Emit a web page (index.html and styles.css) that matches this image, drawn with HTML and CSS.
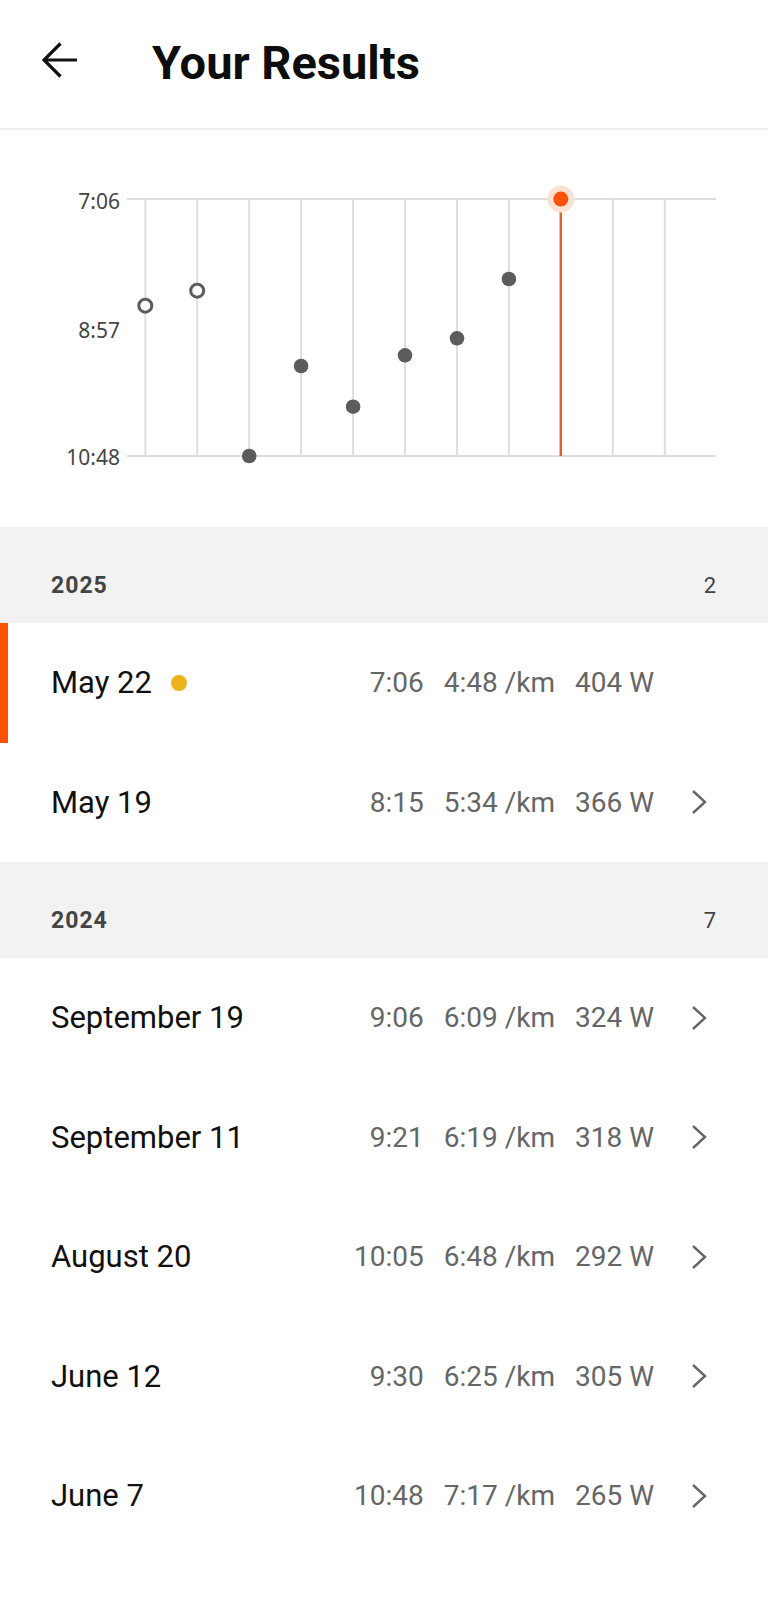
FILE: index.html
```html
<!DOCTYPE html>
<html lang="en">
<head>
    <meta charset="UTF-8">
    <meta name="viewport" content="width=device-width, initial-scale=1.0">
    <title>Your Results</title>
    <link rel="stylesheet" href="styles.css">
</head>
<body>
<div class="screen">

    <header class="topbar">
        <svg class="back" viewBox="0 0 36 36" width="36" height="36">
            <path d="M2 18 H35 M18.5 1.5 L2 18 L18.5 34.5" fill="none" stroke="#111" stroke-width="3.2"/>
        </svg>
        <h1>Your Results</h1>
    </header>

    <!-- grafico: y da pagina menos 130 -->
    <section class="chart">
        <svg viewBox="0 0 768 397" width="768" height="397">
            <g stroke="#dedede" stroke-width="2">
                <line x1="127" y1="69" x2="716" y2="69"/>
                <line x1="127" y1="326" x2="716" y2="326"/>
                <line x1="145.3" y1="69" x2="145.3" y2="326"/>
                <line x1="197.2" y1="69" x2="197.2" y2="326"/>
                <line x1="249.2" y1="69" x2="249.2" y2="326"/>
                <line x1="301.1" y1="69" x2="301.1" y2="326"/>
                <line x1="353.1" y1="69" x2="353.1" y2="326"/>
                <line x1="405" y1="69" x2="405" y2="326"/>
                <line x1="457" y1="69" x2="457" y2="326"/>
                <line x1="508.9" y1="69" x2="508.9" y2="326"/>
                <line x1="612.8" y1="69" x2="612.8" y2="326"/>
                <line x1="664.8" y1="69" x2="664.8" y2="326"/>
            </g>
            <g class="axis-label">
                <text x="120" y="79">7:06</text>
                <text x="120" y="207.5">8:57</text>
                <text x="120" y="334.5">10:48</text>
            </g>
            <line x1="560.8" y1="69" x2="560.8" y2="326" stroke="#d9662c" stroke-width="2.5"/>
            <g fill="#fff" stroke="#5c5c5c" stroke-width="3">
                <circle cx="145.3" cy="175.7" r="6.5"/>
                <circle cx="197.2" cy="160.7" r="6.5"/>
            </g>
            <g fill="#5c5c5c">
                <circle cx="249.2" cy="326" r="7.3"/>
                <circle cx="301.1" cy="236" r="7.3"/>
                <circle cx="353.1" cy="276.7" r="7.3"/>
                <circle cx="405" cy="225.3" r="7.3"/>
                <circle cx="457" cy="208.3" r="7.3"/>
                <circle cx="508.9" cy="149" r="7.3"/>
            </g>
            <circle cx="560.8" cy="69" r="13.5" fill="#fde2d3"/>
            <circle cx="560.8" cy="69" r="7.5" fill="#ff5200"/>
        </svg>
    </section>

    <div class="year">
        <span class="year-title">2025</span>
        <span class="year-count">2</span>
    </div>

    <div class="row current">
        <span class="date">May 22</span>
        <span class="new-dot"></span>
        <div class="stats"><span>7:06</span><span>4:48 /km</span><span>404 W</span></div>
        <svg class="chev" viewBox="0 0 16 26" width="16" height="26"><path d="M2 2 L14 13 L2 24" fill="none" stroke="#666" stroke-width="2.4"/></svg>
    </div>

    <div class="row">
        <span class="date">May 19</span>
        <div class="stats"><span>8:15</span><span>5:34 /km</span><span>366 W</span></div>
        <svg class="chev" viewBox="0 0 16 26" width="16" height="26"><path d="M2 2 L14 13 L2 24" fill="none" stroke="#666" stroke-width="2.4"/></svg>
    </div>

    <div class="year">
        <span class="year-title">2024</span>
        <span class="year-count">7</span>
    </div>

    <div class="row">
        <span class="date">September 19</span>
        <div class="stats"><span>9:06</span><span>6:09 /km</span><span>324 W</span></div>
        <svg class="chev" viewBox="0 0 16 26" width="16" height="26"><path d="M2 2 L14 13 L2 24" fill="none" stroke="#666" stroke-width="2.4"/></svg>
    </div>

    <div class="row">
        <span class="date">September 11</span>
        <div class="stats"><span>9:21</span><span>6:19 /km</span><span>318 W</span></div>
        <svg class="chev" viewBox="0 0 16 26" width="16" height="26"><path d="M2 2 L14 13 L2 24" fill="none" stroke="#666" stroke-width="2.4"/></svg>
    </div>

    <div class="row">
        <span class="date">August 20</span>
        <div class="stats"><span>10:05</span><span>6:48 /km</span><span>292 W</span></div>
        <svg class="chev" viewBox="0 0 16 26" width="16" height="26"><path d="M2 2 L14 13 L2 24" fill="none" stroke="#666" stroke-width="2.4"/></svg>
    </div>

    <div class="row">
        <span class="date">June 12</span>
        <div class="stats"><span>9:30</span><span>6:25 /km</span><span>305 W</span></div>
        <svg class="chev" viewBox="0 0 16 26" width="16" height="26"><path d="M2 2 L14 13 L2 24" fill="none" stroke="#666" stroke-width="2.4"/></svg>
    </div>

    <div class="row">
        <span class="date">June 7</span>
        <div class="stats"><span>10:48</span><span>7:17 /km</span><span>265 W</span></div>
        <svg class="chev" viewBox="0 0 16 26" width="16" height="26"><path d="M2 2 L14 13 L2 24" fill="none" stroke="#666" stroke-width="2.4"/></svg>
    </div>

</div>
</body>
</html>
```

FILE: styles.css
```css
* {
    box-sizing: border-box;
}

body {
    margin: 0;
    background: #fff;
    color: #111;
    font-family: Roboto, "Liberation Sans", sans-serif;
}

.screen {
    height: 100vh;
    overflow: hidden;
}

.topbar {
    height: 130px;
    display: flex;
    align-items: center;
    padding: 0 0 8px 42px;
    border-bottom: 2px solid #eeeeee;
}

.back {
    display: block;
    flex-shrink: 0;
}

.topbar h1 {
    margin: 5px 0 0 74px;
    font-size: 47px;
    font-weight: 700;
    color: #0d0d0d;
}

.chart {
    height: 397px;
}

.chart svg {
    display: block;
}

.axis-label {
    font-family: "Noto Sans", "Open Sans", sans-serif;
    font-size: 21px;
    fill: #454545;
    text-anchor: end;
}

.year {
    height: 96px;
    display: flex;
    align-items: center;
    justify-content: space-between;
    padding: 20px 52px 0 51px;
    background: #f2f2f2;
    color: #444;
    font-size: 22px;
}

.year-title {
    font-weight: 700;
    font-size: 23px;
    letter-spacing: 1px;
}

.row {
    height: 119.5px;
    display: flex;
    align-items: center;
    padding: 0 61px 0 51px;
}

.row.current {
    border-left: 8px solid #fc5200;
    padding-left: 43px;
}

.date {
    font-size: 31px;
    color: #111;
}

.new-dot {
    width: 16px;
    height: 16px;
    margin-left: 19px;
    border-radius: 50%;
    background: #edb21b;
}

.stats {
    margin-left: auto;
    display: flex;
    gap: 20px;
    font-size: 28px;
    color: #666;
}

.chev {
    display: block;
    margin-left: 37px;
    flex-shrink: 0;
}

.row.current .chev {
    visibility: hidden;
}
```
